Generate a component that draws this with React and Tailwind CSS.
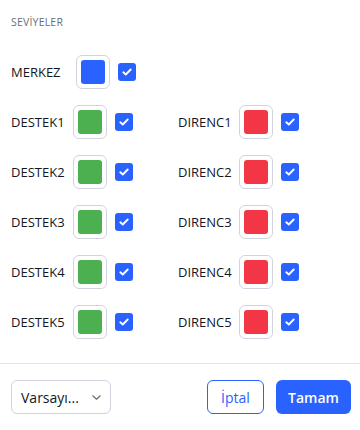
import React from "react";

function Check() {
  return (
    <div className="w-[18px] h-[18px] rounded-[3px] bg-[#2962ff] flex items-center justify-center shrink-0">
      <svg width="10" height="8" viewBox="0 0 10 8" fill="none">
        <path d="M1.3 4.3 L3.8 6.5 L8.7 1.5" stroke="white" strokeWidth="1.9" strokeLinecap="round" strokeLinejoin="round" />
      </svg>
    </div>
  );
}

function Swatch({ color }) {
  return (
    <div className="w-[34px] h-[34px] rounded-[6px] border border-[#d1d4dc] p-[4px] shrink-0">
      <div className={`w-full h-full rounded-[3px] ${color}`} />
    </div>
  );
}

function Row({ label, color, labelW }) {
  return (
    <div className="flex items-center h-[34px]">
      <div className={`${labelW} text-[13px] text-[#131722] leading-[18px]`}>{label}</div>
      <Swatch color={color} />
      <div className="w-[8px]" />
      <Check />
    </div>
  );
}

export default function App() {
  const rows = [1, 2, 3, 4, 5];
  return (
    <div className="w-[360px] h-[430px] bg-white flex flex-col" style={{ fontFamily: '"Open Sans", "Noto Sans", sans-serif' }}>
      <div className="pl-[11px] pt-[14px]">
        <div className="text-[10.5px] leading-[16px] text-[#6a6d78] tracking-[0.2px]">SEVİYELER</div>
        <div className="mt-[25px]">
          <Row label="MERKEZ" color="bg-[#2962ff]" labelW="w-[65px]" />
        </div>
        <div className="mt-[16px] flex">
          <div className="flex flex-col gap-[16px] w-[167px]">
            {rows.map((n) => (
              <Row key={n} label={`DESTEK${n}`} color="bg-[#4caf50]" labelW="w-[62px]" />
            ))}
          </div>
          <div className="flex flex-col gap-[16px]">
            {rows.map((n) => (
              <Row key={n} label={`DIRENC${n}`} color="bg-[#f23645]" labelW="w-[61px]" />
            ))}
          </div>
        </div>
      </div>
      <div className="mt-[24px] h-px bg-[#e0e3eb]" />
      <div className="flex items-center pl-[11px] pr-[9px] pt-[16px]">
        <div className="w-[100px] h-[34px] rounded-[6px] border border-[#d1d4dc] flex items-center pl-[9px] pr-[9px]">
          <span className="text-[14px] text-[#131722] flex-1">Varsayı...</span>
          <svg width="9" height="5" viewBox="0 0 9 5" fill="none">
            <path d="M0.8 0.8 L4.5 4.2 L8.2 0.8" stroke="#6a6d78" strokeWidth="1.2" strokeLinecap="round" strokeLinejoin="round" />
          </svg>
        </div>
        <div className="flex-1" />
        <button className="w-[57px] h-[34px] rounded-[6px] border border-[#2962ff] text-[#2962ff] text-[14px] flex items-center justify-center">
          İptal
        </button>
        <button className="ml-[12px] w-[75px] h-[34px] rounded-[6px] bg-[#2962ff] text-white text-[14px] font-semibold flex items-center justify-center">
          Tamam
        </button>
      </div>
    </div>
  );
}
